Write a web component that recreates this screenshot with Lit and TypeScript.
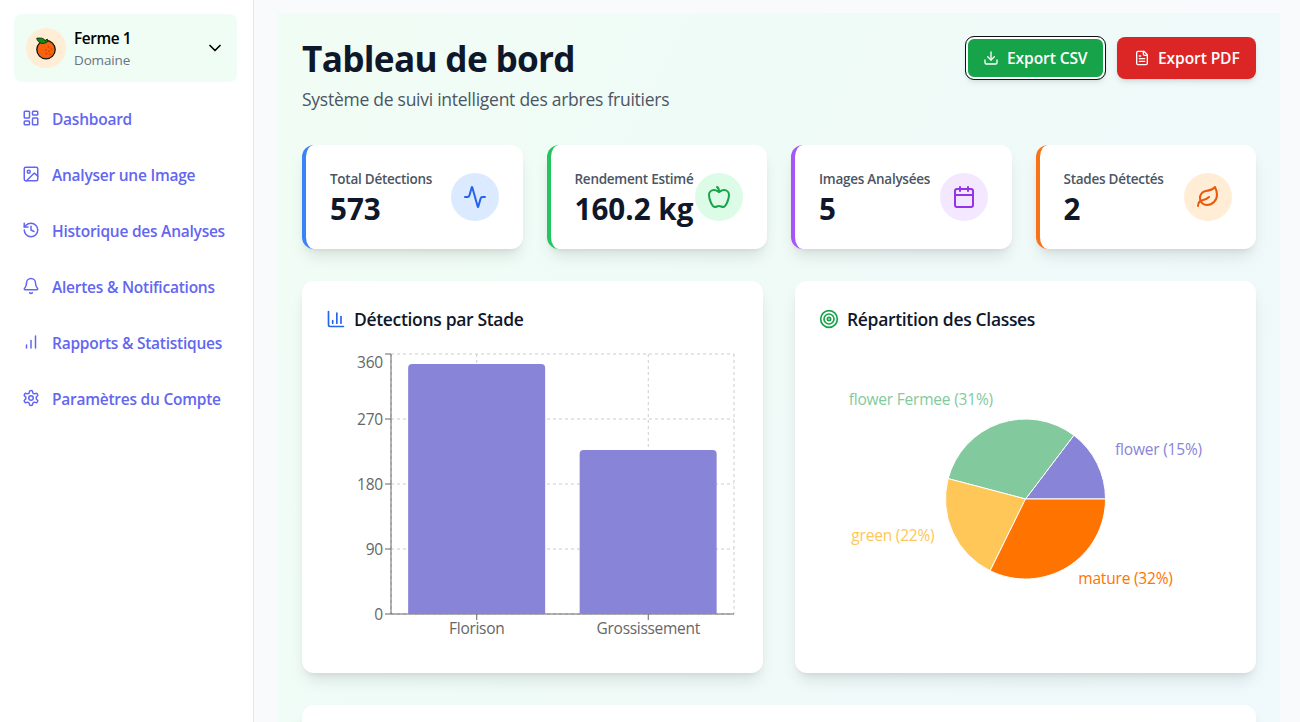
import { LitElement, html, css, svg } from "lit";
import { customElement, property } from "lit/decorators.js";

const ICONS: Record<string, unknown> = {
  dashboard: svg`<rect width="7" height="9" x="3" y="3" rx="1"/><rect width="7" height="5" x="14" y="3" rx="1"/><rect width="7" height="9" x="14" y="12" rx="1"/><rect width="7" height="5" x="3" y="16" rx="1"/>`,
  image: svg`<rect width="18" height="18" x="3" y="3" rx="2"/><circle cx="9" cy="9" r="2"/><path d="m21 15-3.086-3.086a2 2 0 0 0-2.828 0L6 21"/>`,
  history: svg`<path d="M3 12a9 9 0 1 0 9-9 9.75 9.75 0 0 0-6.74 2.74L3 8"/><path d="M3 3v5h5"/><path d="M12 7v5l4 2"/>`,
  bell: svg`<path d="M10.268 21a2 2 0 0 0 3.464 0"/><path d="M3.262 15.326A1 1 0 0 0 4 17h16a1 1 0 0 0 .74-1.673C19.41 13.956 18 12.499 18 8A6 6 0 0 0 6 8c0 4.499-1.411 5.956-2.738 7.326"/>`,
  bars: svg`<path d="M12 20V10"/><path d="M18 20V4"/><path d="M6 20v-4"/>`,
  settings: svg`<path d="M12.22 2h-.44a2 2 0 0 0-2 2v.18a2 2 0 0 1-1 1.73l-.43.25a2 2 0 0 1-2 0l-.15-.08a2 2 0 0 0-2.73.73l-.22.38a2 2 0 0 0 .73 2.73l.15.1a2 2 0 0 1 1 1.72v.51a2 2 0 0 1-1 1.74l-.15.09a2 2 0 0 0-.73 2.73l.22.38a2 2 0 0 0 2.73.73l.15-.08a2 2 0 0 1 2 0l.43.25a2 2 0 0 1 1 1.73V20a2 2 0 0 0 2 2h.44a2 2 0 0 0 2-2v-.18a2 2 0 0 1 1-1.73l.43-.25a2 2 0 0 1 2 0l.15.08a2 2 0 0 0 2.73-.73l.22-.39a2 2 0 0 0-.73-2.73l-.15-.08a2 2 0 0 1-1-1.74v-.5a2 2 0 0 1 1-1.74l.15-.09a2 2 0 0 0 .73-2.73l-.22-.38a2 2 0 0 0-2.73-.73l-.15.08a2 2 0 0 1-2 0l-.43-.25a2 2 0 0 1-1-1.73V4a2 2 0 0 0-2-2z"/><circle cx="12" cy="12" r="3"/>`,
  chevron: svg`<path d="m6 9 6 6 6-6"/>`,
  download: svg`<path d="M21 15v4a2 2 0 0 1-2 2H5a2 2 0 0 1-2-2v-4"/><path d="m7 10 5 5 5-5"/><path d="M12 15V3"/>`,
  file: svg`<path d="M15 2H6a2 2 0 0 0-2 2v16a2 2 0 0 0 2 2h12a2 2 0 0 0 2-2V7Z"/><path d="M14 2v4a2 2 0 0 0 2 2h4"/><path d="M10 9H8"/><path d="M16 13H8"/><path d="M16 17H8"/>`,
  activity: svg`<path d="M22 12h-2.48a2 2 0 0 0-1.93 1.46l-2.35 8.36a.25.25 0 0 1-.48 0L9.24 2.18a.25.25 0 0 0-.48 0l-2.35 8.36A2 2 0 0 1 4.49 12H2"/>`,
  apple: svg`<path d="M12 20.94c1.5 0 2.75 1.06 4 1.06 3 0 6-8 6-12.22A4.91 4.91 0 0 0 17 5c-2.22 0-4 1.44-5 2-1-.56-2.78-2-5-2a4.9 4.9 0 0 0-5 4.78C2 14 5 22 8 22c1.25 0 2.5-1.06 4-1.06Z"/><path d="M10 2c1 .5 2 2 2 5"/>`,
  calendar: svg`<path d="M8 2v4"/><path d="M16 2v4"/><rect width="18" height="18" x="3" y="4" rx="2"/><path d="M3 10h18"/>`,
  leaf: svg`<path d="M11 20A7 7 0 0 1 9.8 6.1C15.5 5 17 4.48 19 2c1 2 2 4.18 2 8 0 5.5-4.78 10-10 10Z"/><path d="M2 21c0-3 1.85-5.36 5.08-6C9.5 14.52 12 13 13 12"/>`,
  chart: svg`<path d="M3 3v16a2 2 0 0 0 2 2h16"/><path d="M18 17V9"/><path d="M13 17V5"/><path d="M8 17v-3"/>`,
  target: svg`<circle cx="12" cy="12" r="10"/><circle cx="12" cy="12" r="6"/><circle cx="12" cy="12" r="2"/>`,
};

@customElement("line-icon")
class LineIcon extends LitElement {
  @property() name = "";
  static styles = css`
    :host { display: block; flex: none; width: 16px; height: 16px; }
    svg { display: block; width: 100%; height: 100%; fill: none; stroke: currentColor; stroke-width: 2; stroke-linecap: round; stroke-linejoin: round; }
  `;
  render() {
    return html`<svg viewBox="0 0 24 24">${ICONS[this.name]}</svg>`;
  }
}

const chartText = css`
  :host { display: block; }
  svg { display: block; width: 413px; height: 300px; overflow: visible; }
  text { font: 400 15.5px "Open Sans", "Noto Sans", sans-serif; letter-spacing: -0.2px; }
`;

@customElement("bar-chart")
class BarChart extends LitElement {
  data = [
    { label: "Florison", value: 346 },
    { label: "Grossissement", value: 227 },
  ];
  static styles = [
    chartText,
    css`
      .grid { stroke: #ccc; stroke-dasharray: 3 3; fill: none; }
      .axis { stroke: #666; fill: none; }
      .tick { fill: #666; }
      .end { text-anchor: end; }
      .mid { text-anchor: middle; }
      .name { letter-spacing: -0.3px; }
      .bar { fill: #8884d8; }
    `,
  ];
  render() {
    const left = 65, right = 408, top = 5, bottom = 265, max = 360;
    const band = (right - left) / this.data.length;
    const y = (v: number) => bottom - (v / max) * (bottom - top);
    const center = (i: number) => left + band * (i + 0.5);
    const ticks = [0, 90, 180, 270, 360];
    return html`<svg viewBox="0 0 413 300">
      ${ticks.map((t) => svg`<line class="grid" x1=${left} x2=${right} y1=${y(t)} y2=${y(t)}/>`)}
      ${[center(0), center(1), left, right].map((x) => svg`<line class="grid" x1=${x} x2=${x} y1=${top} y2=${bottom}/>`)}
      <line class="axis" x1=${left} x2=${right} y1=${bottom} y2=${bottom}/>
      <line class="axis" x1=${left} x2=${left} y1=${top} y2=${bottom}/>
      ${ticks.map((t) => svg`<line class="axis" x1=${left - 6} x2=${left} y1=${y(t)} y2=${y(t)}/>
        <text class="tick end" x=${left - 8} y=${Math.max(y(t), 12.5) + 6}>${t}</text>`)}
      ${this.data.map((d, i) => {
        const w = Math.floor(band * 0.8), x = left + band * (i + 0.1), t = y(d.value);
        return svg`<line class="axis" x1=${center(i)} x2=${center(i)} y1=${bottom} y2=${bottom + 6}/>
          <text class="tick mid name" x=${center(i)} y=${bottom + 19.6}>${d.label}</text>
          <path class="bar" d="M${x},${t + 4}a4,4 0 0 1 4,-4h${w - 8}a4,4 0 0 1 4,4V${bottom}h${-w}Z"/>`;
      })}
    </svg>`;
  }
}

@customElement("pie-chart")
class PieChart extends LitElement {
  data = [
    { label: "flower", value: 84, color: "#8884d8" },
    { label: "flower Fermee", value: 179, color: "#82ca9d" },
    { label: "green", value: 125, color: "#ffc658" },
    { label: "mature", value: 185, color: "#ff7300" },
  ];
  static styles = [
    chartText,
    css`
      .slice { stroke: #fff; stroke-width: 1; }
      .start { text-anchor: start; }
      .end { text-anchor: end; }
    `,
  ];
  render() {
    const cx = 206.5, cy = 150, r = 80;
    const total = this.data.reduce((s, d) => s + d.value, 0);
    const at = (a: number, rad: number) => [cx + rad * Math.cos(a), cy - rad * Math.sin(a)];
    let angle = 0;
    return html`<svg viewBox="0 0 413 300">
      ${this.data.map((d) => {
        const a0 = angle;
        const a1 = (angle += (d.value / total) * Math.PI * 2);
        const [x0, y0] = at(a0, r);
        const [x1, y1] = at(a1, r);
        const [lx, ly] = at((a0 + a1) / 2, 100);
        return svg`<path class="slice" fill=${d.color} d="M${x0},${y0}A${r},${r} 0 0 0 ${x1},${y1}L${cx},${cy}Z"/>
          <text class=${lx > cx ? "start" : "end"} fill=${d.color} x=${lx} y=${ly + 0.4}>${d.label} (${Math.round((d.value / total) * 100)}%)</text>`;
      })}
    </svg>`;
  }
}

@customElement("app-root")
class AppRoot extends LitElement {
  nav = [
    ["dashboard", "Dashboard"],
    ["image", "Analyser une Image"],
    ["history", "Historique des Analyses"],
    ["bell", "Alertes & Notifications"],
    ["bars", "Rapports & Statistiques"],
    ["settings", "Paramètres du Compte"],
  ];
  stats = [
    ["blue", "activity", "Total Détections", "573"],
    ["green", "apple", "Rendement Estimé", "160.2 kg"],
    ["purple", "calendar", "Images Analysées", "5"],
    ["orange", "leaf", "Stades Détectés", "2"],
  ];
  static styles = css`
    :host { display: flex; height: 722px; overflow: hidden; background: #f9fafc; color: #0f172a; font-family: "Open Sans", "Noto Sans", sans-serif; }
    * { box-sizing: border-box; }
    .sidebar { width: 254px; flex: none; padding: 14px 16px 14px 14px; border-right: 1px solid #e5e7eb; background: #fff; }
    .farm { display: flex; align-items: center; gap: 8px; height: 68px; padding: 0 12px; border-radius: 8px; background: #f0fdf4; color: #000; }
    .avatar { display: flex; align-items: center; justify-content: center; flex: none; width: 40px; height: 40px; border-radius: 50%; background: #ffedd5; }
    .avatar svg { width: 24px; height: 24px; }
    .who { flex: 1; }
    .name { font-size: 15.4px; font-weight: 600; line-height: 24px; height: 22px; letter-spacing: -0.4px; }
    .kind { font-size: 13.5px; line-height: 22px; height: 20px; letter-spacing: -0.15px; color: #6b7280; }
    .farm line-icon { width: 20px; height: 20px; }
    nav { display: flex; flex-direction: column; gap: 16px; padding-top: 16px; }
    .item { display: flex; align-items: center; gap: 12px; height: 40px; padding-left: 8px; color: #6366f1; font-size: 15.5px; font-weight: 600; letter-spacing: -0.24px; white-space: nowrap; }
    .item span { padding-top: 2px; }
    .item line-icon { width: 18px; height: 18px; }
    main { flex: 1; min-width: 0; padding: 13px 20px 0 24px; }
    .panel { height: 2000px; padding: 24px; background: linear-gradient(to bottom right, #f0fdf4, #eff6ff); }
    header { display: flex; justify-content: space-between; align-items: flex-start; height: 76px; margin-bottom: 32px; }
    h1 { margin: 0 0 8px; font-size: 35.2px; font-weight: 700; line-height: 43px; height: 40px; letter-spacing: -0.7px; }
    .sub { margin: 0; font-size: 17.5px; line-height: 29px; letter-spacing: -0.26px; color: #4b5563; }
    .actions { display: flex; gap: 12px; }
    .btn { display: flex; align-items: center; gap: 8px; width: 139px; height: 42px; padding: 0 0 0 17px; border: 0; border-radius: 8px; color: #fff; font: 600 15.6px "Open Sans", "Noto Sans", sans-serif; letter-spacing: -0.12px; white-space: nowrap; box-shadow: 0 4px 6px -1px #0000001a, 0 2px 4px -2px #0000001a; }
    .csv { background: #16a34a; outline: 1px solid #101010; box-shadow: inset 0 0 0 2px #fff, 0 4px 6px -1px #0000001a, 0 2px 4px -2px #0000001a; }
    .pdf { background: #dc2626; }
    .stats { display: grid; grid-template-columns: repeat(4, minmax(0, 1fr)); gap: 24px; margin-bottom: 32px; }
    .card { border-radius: 12px; background: #fff; box-shadow: 0 10px 15px -3px #0000001a, 0 4px 6px -4px #0000001a; padding: 24px; }
    .stat { display: flex; align-items: center; justify-content: space-between; height: 104px; border-left: 4px solid; }
    .text { flex: 1; min-width: 0; white-space: nowrap; }
    .label { font-size: 13.5px; font-weight: 600; line-height: 21px; height: 20px; letter-spacing: -0.26px; color: #4b5563; }
    .value { font-size: 29.6px; font-weight: 700; line-height: 40px; height: 36px; color: #0f172a; }
    .dot { display: flex; align-items: center; justify-content: center; flex: none; width: 48px; height: 48px; border-radius: 50%; }
    .dot line-icon { width: 24px; height: 24px; }
    .blue { border-color: #3b82f6; } .blue .dot { background: #dbeafe; color: #2563eb; }
    .green { border-color: #22c55e; } .green .dot { background: #dcfce7; color: #16a34a; }
    .purple { border-color: #a855f7; } .purple .dot { background: #f3e8ff; color: #9333ea; }
    .orange { border-color: #f97316; } .orange .dot { background: #ffedd5; color: #ea580c; }
    .charts { display: grid; grid-template-columns: 1fr 1fr; gap: 32px; margin-bottom: 32px; }
    .chart { height: 392px; }
    h2 { display: flex; align-items: center; gap: 8px; height: 28px; margin: 0 0 16px; font-size: 17.5px; font-weight: 600; letter-spacing: -0.33px; }
    h2 line-icon { width: 20px; height: 20px; }
    .stage line-icon { color: #2563eb; }
    .classes line-icon { color: #16a34a; }
    .next { height: 300px; }
  `;
  render() {
    return html`
      <aside class="sidebar">
        <div class="farm">
          <div class="avatar">
            <svg viewBox="0 0 24 24">
              <circle cx="12" cy="13.6" r="9.2" fill="#f7630c" stroke="#111" stroke-width="1.3"/>
              <path d="M2.6 2.3C6 1.7 9.6 1.8 11.2 4.6L13.2 3l.9 2.2L12 6.6C8.5 8.6 4.2 7.2 2.6 2.3Z" fill="#138a10" stroke="#111" stroke-width="0.8" stroke-linejoin="round"/>
              <g fill="#c43e0c"><circle cx="14.5" cy="11" r=".8"/><circle cx="17.5" cy="13" r=".8"/><circle cx="12" cy="14" r=".8"/><circle cx="15" cy="15.2" r=".8"/><circle cx="12.5" cy="17.6" r=".8"/><circle cx="16" cy="18.3" r=".8"/></g>
            </svg>
          </div>
          <div class="who"><div class="name">Ferme 1</div><div class="kind">Domaine</div></div>
          <line-icon name="chevron"></line-icon>
        </div>
        <nav>${this.nav.map(([i, t]) => html`<a class="item"><line-icon name=${i}></line-icon><span>${t}</span></a>`)}</nav>
      </aside>
      <main>
        <div class="panel">
          <header>
            <div><h1>Tableau de bord</h1><p class="sub">Système de suivi intelligent des arbres fruitiers</p></div>
            <div class="actions">
              <button class="btn csv"><line-icon name="download"></line-icon>Export CSV</button>
              <button class="btn pdf"><line-icon name="file"></line-icon>Export PDF</button>
            </div>
          </header>
          <section class="stats">
            ${this.stats.map(([c, i, l, v]) => html`<div class="card stat ${c}">
              <div class="text"><div class="label">${l}</div><div class="value">${v}</div></div>
              <div class="dot"><line-icon name=${i}></line-icon></div>
            </div>`)}
          </section>
          <section class="charts">
            <div class="card chart stage"><h2><line-icon name="chart"></line-icon>Détections par Stade</h2><bar-chart></bar-chart></div>
            <div class="card chart classes"><h2><line-icon name="target"></line-icon>Répartition des Classes</h2><pie-chart></pie-chart></div>
          </section>
          <div class="card next"></div>
        </div>
      </main>
    `;
  }
}
